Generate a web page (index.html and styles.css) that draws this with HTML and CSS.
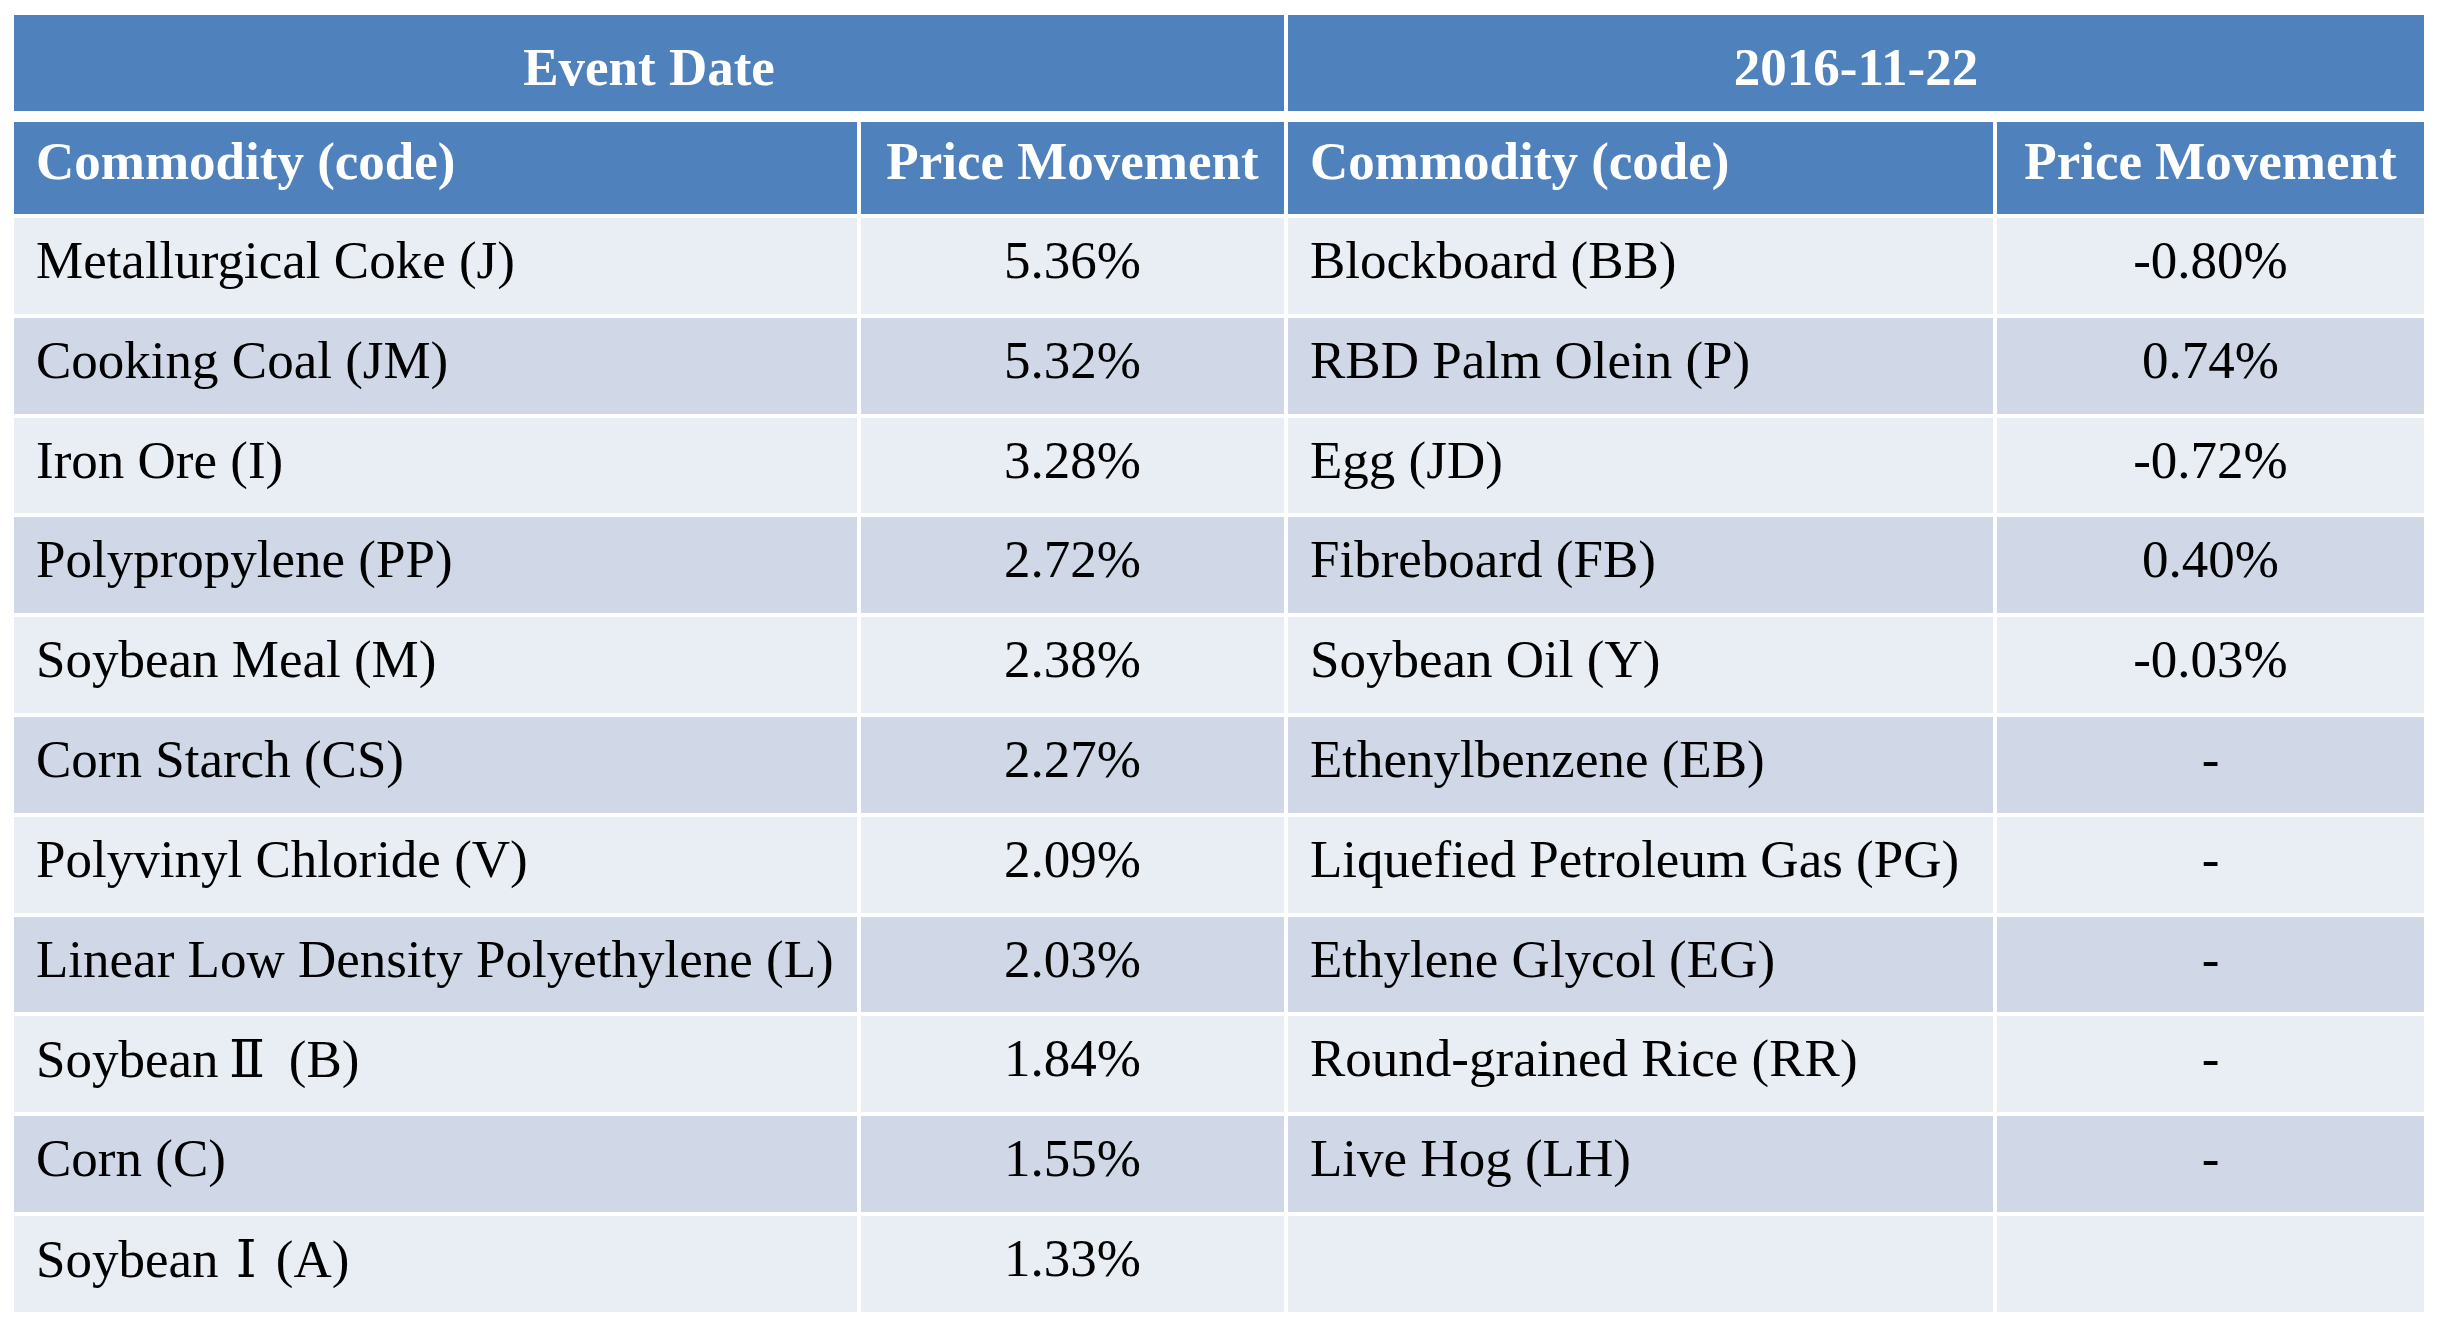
FILE: index.html
```html
<!DOCTYPE html>
<html lang="en">
<head>
<meta charset="utf-8">
<title>Commodity Price Movement</title>
<link rel="stylesheet" href="styles.css">
</head>
<body>
<div class="sheet">
  <div class="grid">
    <div class="cell top span2">Event Date</div>
    <div class="cell top span2">2016-11-22</div>

    <div class="cell head left">Commodity (code)</div>
    <div class="cell head center">Price Movement</div>
    <div class="cell head left">Commodity (code)</div>
    <div class="cell head center">Price Movement</div>

    <div class="cell light left">Metallurgical Coke (J)</div>
    <div class="cell light center">5.36%</div>
    <div class="cell light left">Blockboard (BB)</div>
    <div class="cell light center">-0.80%</div>

    <div class="cell dark left">Cooking Coal (JM)</div>
    <div class="cell dark center">5.32%</div>
    <div class="cell dark left">RBD Palm Olein (P)</div>
    <div class="cell dark center">0.74%</div>

    <div class="cell light left">Iron Ore (I)</div>
    <div class="cell light center">3.28%</div>
    <div class="cell light left">Egg (JD)</div>
    <div class="cell light center">-0.72%</div>

    <div class="cell dark left">Polypropylene (PP)</div>
    <div class="cell dark center">2.72%</div>
    <div class="cell dark left">Fibreboard (FB)</div>
    <div class="cell dark center">0.40%</div>

    <div class="cell light left">Soybean Meal (M)</div>
    <div class="cell light center">2.38%</div>
    <div class="cell light left">Soybean Oil (Y)</div>
    <div class="cell light center">-0.03%</div>

    <div class="cell dark left">Corn Starch (CS)</div>
    <div class="cell dark center">2.27%</div>
    <div class="cell dark left">Ethenylbenzene (EB)</div>
    <div class="cell dark center">-</div>

    <div class="cell light left">Polyvinyl Chloride (V)</div>
    <div class="cell light center">2.09%</div>
    <div class="cell light left">Liquefied Petroleum Gas (PG)</div>
    <div class="cell light center">-</div>

    <div class="cell dark left">Linear Low Density Polyethylene (L)</div>
    <div class="cell dark center">2.03%</div>
    <div class="cell dark left">Ethylene Glycol (EG)</div>
    <div class="cell dark center">-</div>

    <div class="cell light left">Soybean<span class="roman two">Ⅱ</span> (B)</div>
    <div class="cell light center">1.84%</div>
    <div class="cell light left">Round-grained Rice (RR)</div>
    <div class="cell light center">-</div>

    <div class="cell dark left">Corn (C)</div>
    <div class="cell dark center">1.55%</div>
    <div class="cell dark left">Live Hog (LH)</div>
    <div class="cell dark center">-</div>

    <div class="cell light left">Soybean <span class="roman one">Ⅰ</span>(A)</div>
    <div class="cell light center">1.33%</div>
    <div class="cell light left"></div>
    <div class="cell light center"></div>
  </div>
</div>
</body>
</html>
```

FILE: styles.css
```css
html, body {
  margin: 0;
  padding: 0;
  background: #ffffff;
}

.sheet {
  padding: 15px 0 0 14px;
  font-family: "Liberation Serif", "DejaVu Serif", "Noto Sans CJK SC", serif;
  font-size: 53px;
  color: #000000;
}

.grid {
  display: grid;
  grid-template-columns: 843px 423px 705px 427px;
  grid-template-rows: auto 92px repeat(11, 95.8px);
  column-gap: 4px;
  row-gap: 4px;
  width: 2410px;
}

.cell {
  box-sizing: border-box;
  line-height: 59px;
  white-space: nowrap;
  overflow: hidden;
}

.span2 {
  grid-column: span 2;
}

.top {
  height: 96px;
  margin-bottom: 7px;
  padding-top: 23px;
  background: #4f81bd;
  color: #ffffff;
  font-weight: bold;
  text-align: center;
}

.head {
  padding-top: 10px;
  background: #4f81bd;
  color: #ffffff;
  font-weight: bold;
}

.light {
  padding-top: 13px;
  background: #e9edf4;
}

.dark {
  padding-top: 13px;
  background: #d0d8e8;
}

.left {
  padding-left: 22px;
  text-align: left;
}

.center {
  text-align: center;
}

.roman {
  display: inline-block;
  box-sizing: border-box;
  font-family: "DejaVu Serif", "Noto Sans CJK SC", serif;
}

.roman.two {
  width: 57px;
  text-align: center;
}

.roman.one {
  width: 44px;
  padding-left: 4px;
  text-align: left;
}
```
